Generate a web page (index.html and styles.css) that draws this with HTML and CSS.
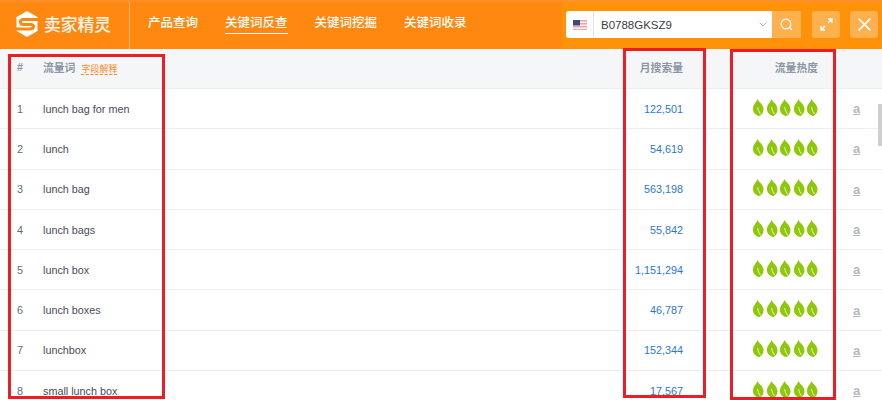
FILE: index.html
```html
<!DOCTYPE html>
<html lang="zh">

<head>
    <meta charset="UTF-8">
    <meta name="viewport" content="width=device-width, initial-scale=1.0">
    <title>卖家精灵</title>
    <link rel="stylesheet" href="styles.css">
</head>

<body>
    <svg class="defs" width="0" height="0">
        <symbol id="leaf" viewBox="0 0 11 17">
            <path d="M4.500 0C5.500 3 10.500 5 10.500 10.500C10.500 13.500 8.500 16 6.500 17C3 16.500 0 14 0 10C0 5 3.500 3.500 4.500 0Z" fill="#8fc70a"/>
            <path d="M4.500 8C5 11 6 13.500 7.500 15" fill="none" stroke="#dcefa8" stroke-width="1.100"/>
        </symbol>
    </svg>

    <!-- 顶部导航 -->
    <header class="topbar">
        <div class="logo">
            <svg class="logo-mark" width="22" height="26" viewBox="0 0 22 26">
                <polygon points="11,0 21.500,6 21.500,20 11,26 0.500,20 0.500,6" fill="#fff"/>
                <path d="M22 8.500H7.500Q4.500 8.500 4.500 11T7.500 13.500H14.500Q17.500 13.500 17.500 15.500T14.500 18H0" fill="none" stroke="#ff8810" stroke-width="3"/>
            </svg>
            <span class="logo-text">卖家精灵</span>
        </div>
        <nav class="nav">
            <a class="nav-item">产品查询</a>
            <a class="nav-item active">关键词反查</a>
            <a class="nav-item">关键词挖掘</a>
            <a class="nav-item">关键词收录</a>
        </nav>
        <div class="tools">
            <div class="search">
                <div class="market">
                    <svg width="14" height="10" viewBox="0 0 14 10">
                        <rect width="14" height="10" fill="#e9a6ab"/>
                        <rect y="1.500" width="14" height="1.500" fill="#fbeeee"/>
                        <rect y="4.500" width="14" height="1.500" fill="#fbeeee"/>
                        <rect y="7.500" width="14" height="1.500" fill="#fbeeee"/>
                        <rect width="7" height="5.500" fill="#3c4a78"/>
                    </svg>
                </div>
                <div class="asin">
                    <span>B0788GKSZ9</span>
                    <svg width="8" height="5" viewBox="0 0 8 5">
                        <path d="M0.500 0.500L4 4L7.500 0.500" fill="none" stroke="#b5b8bd" stroke-width="1"/>
                    </svg>
                </div>
                <button class="search-btn">
                    <svg width="13" height="13" viewBox="0 0 13 13">
                        <circle cx="6" cy="6" r="4.800" fill="none" stroke="#fff" stroke-width="1.200"/>
                        <path d="M9.500 9.500L12 12" stroke="#fff" stroke-width="1.200"/>
                    </svg>
                </button>
            </div>
            <button class="tool-btn expand">
                <svg width="13" height="13" viewBox="0 0 13 13">
                    <path d="M8 1H12V5M12 1L8 5M5 12H1V8M1 12L5 8" fill="none" stroke="#fff" stroke-width="1.300"/>
                </svg>
            </button>
            <button class="tool-btn">
                <svg width="13" height="13" viewBox="0 0 13 13">
                    <path d="M0.500 0.500L12.500 12.500M12.500 0.500L0.500 12.500" stroke="#fff" stroke-width="1.600"/>
                </svg>
            </button>
        </div>
    </header>

    <!-- 列表 -->
    <main class="list">
        <div class="row head">
            <div>#</div>
            <div class="head-word">流量词 <span class="hint">字段解释</span></div>
            <div class="num-head">月搜索量</div>
            <div class="hot-head">流量热度</div>
            <div></div>
        </div>
        <div id="rows"></div>
    </main>

    <div class="scroll-thumb"></div>

    <!-- 红色标注框 -->
    <div class="mark mark-word"></div>
    <div class="mark mark-volume"></div>
    <div class="mark mark-hot"></div>

    <script>
        const keywords = [
            ["lunch bag for men", "122,501"],
            ["lunch", "54,619"],
            ["lunch bag", "563,198"],
            ["lunch bags", "55,842"],
            ["lunch box", "1,151,294"],
            ["lunch boxes", "46,787"],
            ["lunchbox", "152,344"],
            ["small lunch box", "17,567"]
        ];

        const leaf = '<svg class="leaf" width="11" height="17"><use href="#leaf"/></svg>';

        document.getElementById("rows").innerHTML = keywords.map(function (item, i) {
            return `<div class="row">
                <div class="index">${i + 1}</div>
                <div class="word">${item[0]}</div>
                <div class="volume">${item[1]}</div>
                <div class="hot">${leaf.repeat(5)}</div>
                <div class="amazon">a</div>
            </div>`;
        }).join("");
    </script>
</body>

</html>
```

FILE: styles.css
```css
* {
    margin: 0;
    padding: 0;
    box-sizing: border-box;
}

body {
    position: relative;
    height: 400px;
    overflow: hidden;
    background-color: #ffffff;
    font-family: "Liberation Sans", "Noto Sans CJK SC", sans-serif;
}

.defs {
    position: absolute;
}

/* 顶部导航 */
.topbar {
    display: flex;
    height: 49px;
    background-color: #ff8810;
    border-top: 2px solid #ff8f2a;
    color: #ffffff;
}

.logo {
    display: flex;
    align-items: center;
    gap: 6px;
    width: 130px;
    padding-left: 16px;
    padding-bottom: 3px;
    border-right: 1px solid rgba(255, 255, 255, 0.4);
}

.logo-text {
    font-size: 16.800px;
    font-weight: 500;
    opacity: 0.92;
}

.nav {
    display: flex;
    gap: 27px;
    padding-left: 18px;
    padding-bottom: 4px;
    align-items: center;
}

.nav-item {
    font-size: 12.500px;
    font-weight: 500;
    line-height: 20px;
    border-bottom: 1px solid transparent;
}

.nav-item.active {
    border-bottom-color: #ffffff;
}

.tools {
    display: flex;
    align-items: center;
    margin-left: auto;
    width: 320px;
    padding-left: 4px;
    padding-bottom: 2px;
    background-color: #ff9208;
}

.search {
    display: flex;
    width: 235px;
    height: 27px;
    border-radius: 3px;
    overflow: hidden;
    background-color: #ffffff;
}

.market {
    display: flex;
    align-items: center;
    justify-content: center;
    width: 28px;
    border-right: 1px solid #e4e4e4;
}

.asin {
    flex: 1;
    display: flex;
    align-items: center;
    justify-content: space-between;
    padding: 0 5px 0 7px;
    font-size: 11.500px;
    color: #3c3c46;
}

button {
    display: flex;
    align-items: center;
    justify-content: center;
    border: none;
}

.search-btn {
    width: 29px;
    background-color: #ffb04f;
}

.tool-btn {
    width: 28px;
    height: 27px;
    margin-left: 10px;
    border-radius: 3px;
    background-color: #ffb04f;
}

.tool-btn.expand {
    margin-left: 11px;
}

/* 列表 */
.row {
    display: grid;
    grid-template-columns: 26px 560px 80px 135px 64px;
    align-items: center;
    height: 40.300px;
    padding-left: 17px;
    border-bottom: 1px solid #eceef5;
    font-size: 10.800px;
    color: #4a4a58;
}

.row.head {
    height: 40px;
    padding-bottom: 3px;
    background-color: #f5f6f8;
    color: #8d96a4;
    font-weight: bold;
}

.head-word {
    display: flex;
    align-items: center;
    gap: 6px;
}

.hint {
    margin-top: 5px;
    font-size: 9px;
    font-weight: normal;
    color: #ff8a1c;
    border-bottom: 1px dashed #ff8a1c;
    line-height: 10px;
}

.num-head,
.hot-head,
.volume {
    text-align: right;
}

.index {
    color: #5c6c84;
}

.volume {
    color: #2a78cf;
}

.hot {
    display: flex;
    justify-content: flex-end;
    gap: 2.400px;
    padding-bottom: 3px;
}

.amazon {
    padding-left: 35px;
    font-size: 13px;
    font-weight: bold;
    color: #b4b7bf;
    text-decoration: underline;
}

.scroll-thumb {
    position: absolute;
    top: 104px;
    right: 0;
    width: 4px;
    height: 42px;
    background-color: #cfcfcf;
}

/* 红色标注框 */
.mark {
    position: absolute;
    border: 3px solid #ee1c25;
}

.mark-word {
    left: 8px;
    top: 54px;
    width: 157px;
    height: 345px;
}

.mark-volume {
    left: 623px;
    top: 48px;
    width: 83px;
    height: 350px;
}

.mark-hot {
    left: 730px;
    top: 49px;
    width: 106px;
    height: 351px;
}
```
